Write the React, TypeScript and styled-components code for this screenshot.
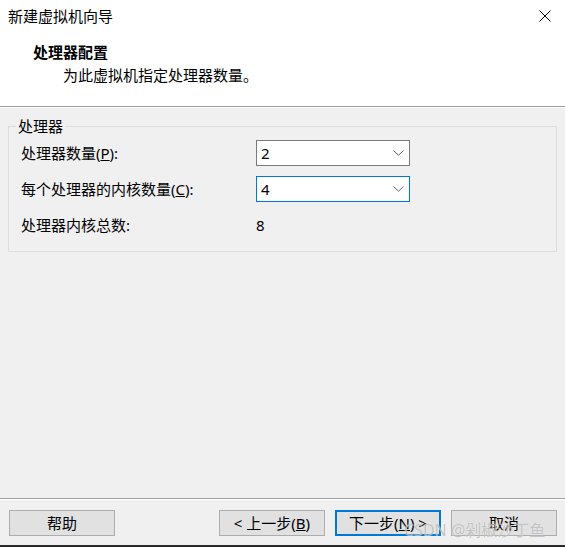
import React from "react";
import styled, { createGlobalStyle } from "styled-components";

const GlobalStyle = createGlobalStyle`
  html, body {
    margin: 0;
    padding: 0;
  }
  body {
    font-family: "Noto Sans", "Noto Sans CJK SC", sans-serif;
    font-size: 15px;
    color: #000;
  }
`;

const Window = styled.div`
  position: relative;
  width: 565px;
  height: 547px;
  display: flex;
  flex-direction: column;
  background: #f0f0f0;
  border-bottom: 2px solid #2b2b2b;
  box-sizing: border-box;
  overflow: hidden;
`;

const Top = styled.div`
  background: #fff;
  height: 106px;
  border-bottom: 1px solid #a0a0a0;
  box-shadow: 0 1px 0 #fff;
  display: flex;
  flex-direction: column;
`;

const TitleBar = styled.div`
  height: 32px;
  display: flex;
  align-items: center;
  justify-content: space-between;
  padding: 0 14px 0 8px;
`;

const Title = styled.span`
  line-height: 20px;
  color: #000;
`;

const CloseButton = styled.button`
  border: 0;
  background: none;
  padding: 0;
  width: 12px;
  height: 12px;
  display: flex;
  align-items: center;
  justify-content: center;
`;

const Heading = styled.div`
  padding-left: 33px;
  margin-top: 10px;
  font-weight: 700;
  line-height: 20px;
`;

const SubHeading = styled.div`
  padding-left: 63px;
  margin-top: 3px;
  line-height: 20px;
`;

const Body = styled.div`
  flex: 1;
  padding: 9px 8px 0 8px;
`;

const Group = styled.fieldset`
  margin: 0;
  padding: 4px 7px 13px 7px;
  border: 1px solid #dcdcdc;
  min-width: 0;
`;

const Legend = styled.legend`
  padding: 0 2px;
  line-height: 20px;
`;

const Fields = styled.div`
  display: grid;
  grid-template-columns: 235px 154px;
  grid-auto-rows: 26px;
  row-gap: 10px;
  align-items: center;
  padding-left: 5px;
`;

const Label = styled.span`
  line-height: 20px;
`;

const Value = styled.span`
  line-height: 20px;
`;

const Combo = styled.div<{ $focused?: boolean }>`
  height: 26px;
  box-sizing: border-box;
  background: #fff;
  border: 1px solid ${(p) => (p.$focused ? "#0078d7" : "#7a7a7a")};
  display: flex;
  align-items: center;
  justify-content: space-between;
  padding: 0 5px 0 4px;
`;

const Footer = styled.div`
  border-top: 1px solid #a0a0a0;
  box-shadow: inset 0 1px 0 #fff;
  height: 47px;
  padding: 11px 8px 0 9px;
  box-sizing: border-box;
  display: flex;
  gap: 10px;
`;

const Button = styled.button<{ $default?: boolean }>`
  width: 106px;
  height: 26px;
  box-sizing: border-box;
  background: #e1e1e1;
  border: ${(p) => (p.$default ? "2px solid #0078d7" : "1px solid #adadad")};
  font: inherit;
  color: #000;
  padding: 0;
  line-height: 20px;
`;

const Spacer = styled.div`
  flex: 1;
`;

const Watermark = styled.div`
  position: absolute;
  left: 404px;
  top: 518px;
  font-size: 16px;
  line-height: 24px;
  color: rgba(150, 150, 150, 0.55);
  text-shadow: 0 0 1px rgba(255, 255, 255, 0.8);
  pointer-events: none;
  white-space: nowrap;
`;

const Chevron = () => (
  <svg width="11" height="6" viewBox="0 0 11 6">
    <path d="M0.5 0.5 L5.5 5.2 L10.5 0.5" fill="none" stroke="#606060" strokeWidth="1" />
  </svg>
);

const CloseIcon = () => (
  <svg width="12" height="12" viewBox="0 0 12 12">
    <path d="M0.5 0.5 L11.5 11.5 M11.5 0.5 L0.5 11.5" stroke="#000" strokeWidth="1" />
  </svg>
);

export default function App() {
  return (
    <Window>
      <GlobalStyle />
      <Top>
        <TitleBar>
          <Title>新建虚拟机向导</Title>
          <CloseButton aria-label="关闭">
            <CloseIcon />
          </CloseButton>
        </TitleBar>
        <Heading>处理器配置</Heading>
        <SubHeading>为此虚拟机指定处理器数量。</SubHeading>
      </Top>

      <Body>
        <Group>
          <Legend>处理器</Legend>
          <Fields>
            <Label>
              处理器数量(<u>P</u>):
            </Label>
            <Combo>
              <Value>2</Value>
              <Chevron />
            </Combo>
            <Label>
              每个处理器的内核数量(<u>C</u>):
            </Label>
            <Combo $focused>
              <Value>4</Value>
              <Chevron />
            </Combo>
            <Label>处理器内核总数:</Label>
            <Value>8</Value>
          </Fields>
        </Group>
      </Body>

      <Footer>
        <Button>帮助</Button>
        <Spacer />
        <Button>
          &lt; 上一步(<u>B</u>)
        </Button>
        <Button $default>
          下一步(<u>N</u>) &gt;
        </Button>
        <Button>取消</Button>
      </Footer>

      <Watermark>CSDN @剁椒沙丁鱼</Watermark>
    </Window>
  );
}
